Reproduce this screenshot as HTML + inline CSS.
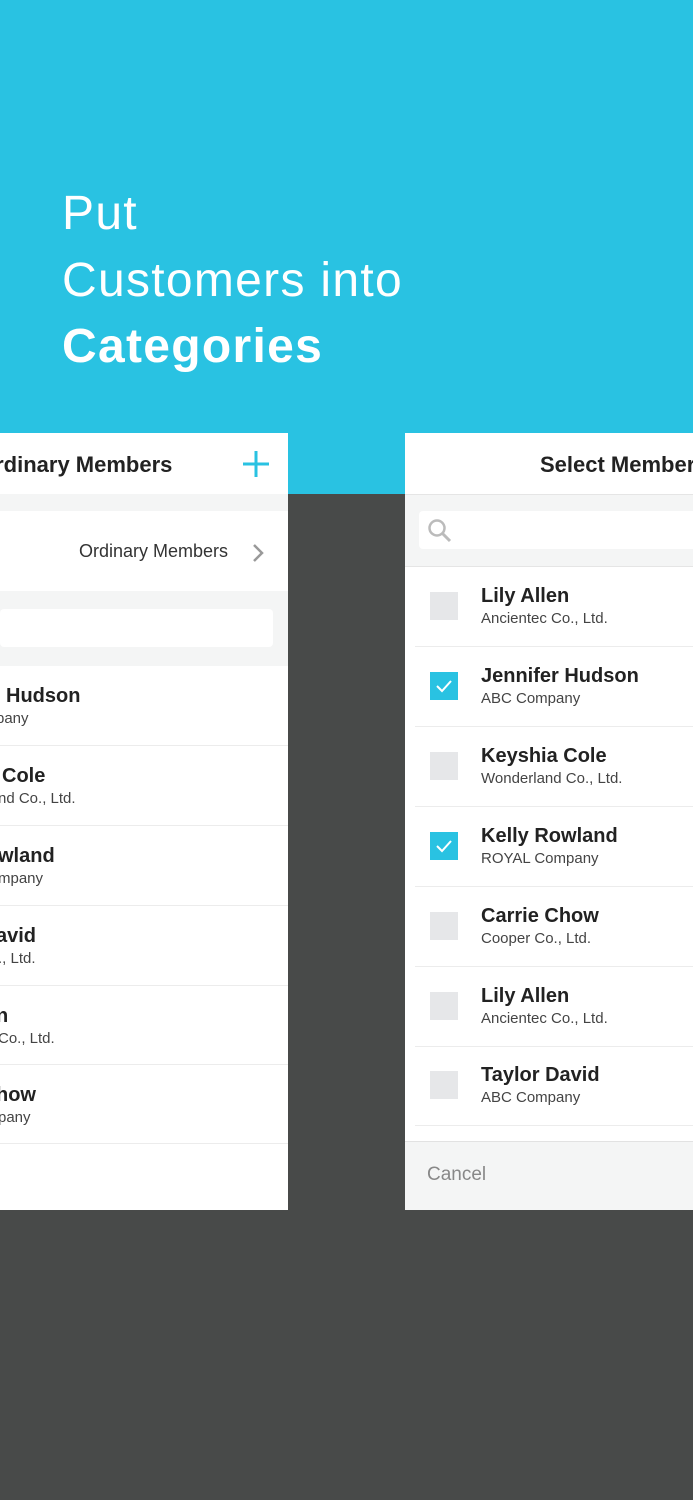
<!DOCTYPE html>
<html><head><meta charset="utf-8"><style>
*{margin:0;padding:0;box-sizing:border-box}
body{width:693px;height:1500px;position:relative;overflow:hidden;background:#484a49;font-family:"Liberation Sans",sans-serif}
.top{position:absolute;left:0;top:0;width:693px;height:494px;background:#29c2e2}
.h{position:absolute;left:62px;color:#fff;font-size:48px;line-height:67px;letter-spacing:1.3px}
.p{position:absolute;background:#fff;top:433px;height:777px;overflow:hidden}
.t{position:absolute;white-space:nowrap;color:#222}
.g{position:absolute;background:#f4f5f5}
.row{position:absolute;left:0;width:100%;height:80px;border-bottom:1px solid #ececec}
.nm{position:absolute;font-size:20px;font-weight:bold;color:#222;white-space:nowrap}
.co{position:absolute;font-size:15px;color:#444;white-space:nowrap}
.cb{position:absolute;left:15px;top:25px;width:28px;height:28px;background:#e6e7e9}
.cb.on{background:#29c2e2}
</style></head><body>
<div class="top"></div>
<div class="h" style="top:180px">Put</div>
<div class="h" style="top:247px">Customers into</div>
<div class="h" style="top:313px;font-weight:bold">Categories</div>

<div class="p" style="left:0;width:288px">
 <div class="t" style="left:-22px;top:19px;font-size:22px;font-weight:bold">Ordinary Members</div>
 <svg style="position:absolute;left:242px;top:17px" width="28" height="28"><path d="M14 1V27M1 14H27" stroke="#29c2e2" stroke-width="3"/></svg>
 <div class="g" style="left:0;top:61px;width:288px;height:17px"></div>
 <div class="t" style="left:79px;top:108px;font-size:18px;color:#333">Ordinary Members</div>
 <svg style="position:absolute;left:251px;top:110px" width="14" height="20"><path d="M3 2L11 10L3 18" stroke="#999" stroke-width="2.5" fill="none"/></svg>
 <div class="g" style="left:0;top:158px;width:288px;height:75px"></div>
 <div style="position:absolute;left:0;top:176px;width:273px;height:38px;background:#fff;border-radius:4px"></div>
 <div class="row" style="top:233px"><div class="nm" style="left:6px;top:19px">Hudson</div><div class="co" style="left:-4px;top:44px">pany</div></div>
 <div class="row" style="top:313px"><div class="nm" style="left:2px;top:19px">Cole</div><div class="co" style="left:-2px;top:44px">nd Co., Ltd.</div></div>
 <div class="row" style="top:393px"><div class="nm" style="left:-2px;top:19px">wland</div><div class="co" style="left:-2px;top:44px">mpany</div></div>
 <div class="row" style="top:473px"><div class="nm" style="left:-4px;top:19px">avid</div><div class="co" style="left:-2px;top:44px">., Ltd.</div></div>
 <div class="row" style="top:553px;height:79px"><div class="nm" style="left:-4px;top:19px">n</div><div class="co" style="left:-2px;top:44px">Co., Ltd.</div></div>
 <div class="row" style="top:632px;height:79px"><div class="nm" style="left:-4px;top:19px">how</div><div class="co" style="left:-2px;top:44px">pany</div></div>
</div>

<div class="p" style="left:405px;width:288px">
 <div class="t" style="left:135px;top:19px;font-size:22px;font-weight:bold">Select Members</div>
 <div class="g" style="left:0;top:61px;width:288px;height:73px;border-top:1px solid #e5e5e5;border-bottom:1px solid #e5e5e5"></div>
 <div style="position:absolute;left:14px;top:78px;width:290px;height:38px;background:#fff;border-radius:4px"></div>
 <svg style="position:absolute;left:22px;top:85px" width="26" height="26"><circle cx="10" cy="10" r="7.5" stroke="#bbb" stroke-width="2.5" fill="none"/><path d="M15.5 15.5L23 23" stroke="#bbb" stroke-width="3"/></svg>
 <div style="position:absolute;left:0;top:134px;width:100%">
 <div class="row" style="top:0;left:10px"><div class="cb"></div><div class="nm" style="left:66px;top:18px">Lily Allen</div><div class="co" style="left:66px;top:43px">Ancientec Co., Ltd.</div></div>
 <div class="row" style="top:80px;left:10px"><div class="cb on"><svg width="28" height="28"><path d="M7 14L12 19L21 9" stroke="#fff" stroke-width="2" fill="none"/></svg></div><div class="nm" style="left:66px;top:18px">Jennifer Hudson</div><div class="co" style="left:66px;top:43px">ABC Company</div></div>
 <div class="row" style="top:160px;left:10px"><div class="cb"></div><div class="nm" style="left:66px;top:18px">Keyshia Cole</div><div class="co" style="left:66px;top:43px">Wonderland Co., Ltd.</div></div>
 <div class="row" style="top:240px;left:10px"><div class="cb on"><svg width="28" height="28"><path d="M7 14L12 19L21 9" stroke="#fff" stroke-width="2" fill="none"/></svg></div><div class="nm" style="left:66px;top:18px">Kelly Rowland</div><div class="co" style="left:66px;top:43px">ROYAL Company</div></div>
 <div class="row" style="top:320px;left:10px"><div class="cb"></div><div class="nm" style="left:66px;top:18px">Carrie Chow</div><div class="co" style="left:66px;top:43px">Cooper Co., Ltd.</div></div>
 <div class="row" style="top:400px;left:10px"><div class="cb"></div><div class="nm" style="left:66px;top:18px">Lily Allen</div><div class="co" style="left:66px;top:43px">Ancientec Co., Ltd.</div></div>
 <div class="row" style="top:479px;left:10px"><div class="cb"></div><div class="nm" style="left:66px;top:18px">Taylor David</div><div class="co" style="left:66px;top:43px">ABC Company</div></div>
 </div>
 <div class="g" style="left:0;top:708px;width:288px;height:69px;border-top:1px solid #e2e2e2"></div>
 <div class="t" style="left:22px;top:731px;font-size:19px;color:#888">Cancel</div>
</div>
</body></html>
